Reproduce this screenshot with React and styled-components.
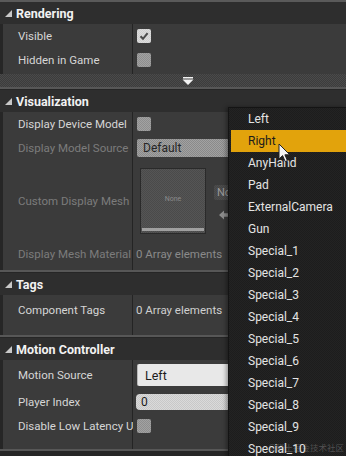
import styled, { createGlobalStyle } from "styled-components";

const GlobalStyle = createGlobalStyle`
  html, body {
    margin: 0;
    padding: 0;
    background: #262626;
  }
  * {
    box-sizing: border-box;
  }
`;

const checker = (a, b) =>
  `repeating-conic-gradient(${a} 0 25%, ${b} 0 50%) 0 0 / 2px 2px`;

const sections = [
  {
    title: "Rendering",
    pad: 2,
    expander: true,
    rows: [
      { label: "Visible", kind: "check", checked: true },
      { label: "Hidden in Game", kind: "check" },
    ],
  },
  {
    title: "Visualization",
    pad: 4,
    rows: [
      { label: "Display Device Model", kind: "check" },
      { label: "Display Model Source", kind: "combo", value: "Default", dim: true },
      { label: "Custom Display Mesh", kind: "mesh", dim: true, h: 82 },
      { label: "Display Mesh Material", kind: "array", dim: true },
    ],
  },
  {
    title: "Tags",
    pad: 10,
    rows: [{ label: "Component Tags", kind: "array", h: 30 }],
  },
  {
    title: "Motion Controller",
    pad: 11,
    rows: [
      { label: "Motion Source", kind: "select", value: "Left", h: 30 },
      { label: "Player Index", kind: "number", value: "0" },
      { label: "Disable Low Latency Update", kind: "check" },
    ],
  },
];

const options = [
  "Left",
  "Right",
  "AnyHand",
  "Pad",
  "ExternalCamera",
  "Gun",
  "Special_1",
  "Special_2",
  "Special_3",
  "Special_4",
  "Special_5",
  "Special_6",
  "Special_7",
  "Special_8",
  "Special_9",
  "Special_10",
];

function HeaderArrow() {
  return (
    <svg width="7" height="7" viewBox="0 0 7 7">
      <polygon points="7,0 7,7 0,7" fill="#c8c8c8" />
    </svg>
  );
}

function ValueCell({ row }) {
  switch (row.kind) {
    case "check":
      return (
        <CheckBox $checked={row.checked}>
          {row.checked && (
            <svg width="10" height="10" viewBox="0 0 10 10">
              <path d="M1.5 5.2 L4 7.8 L8.6 2.2" stroke="#4a4a4a" strokeWidth="2" fill="none" />
            </svg>
          )}
        </CheckBox>
      );
    case "combo":
      return <DisabledCombo>{row.value}</DisabledCombo>;
    case "select":
      return <SelectBox>{row.value}</SelectBox>;
    case "number":
      return <SpinBox>{row.value}</SpinBox>;
    case "array":
      return <ArrayText $dim={row.dim}>0 Array elements</ArrayText>;
    case "mesh":
      return (
        <MeshWrap>
          <Thumb>
            <ThumbLabel>None</ThumbLabel>
            <ThumbBar />
          </Thumb>
          <MeshSide>
            <NoneButton>None</NoneButton>
            <svg width="12" height="10" viewBox="0 0 12 10">
              <path d="M0 5 L5 0.5 L5 3.2 L12 3.2 L12 6.8 L5 6.8 L5 9.5 Z" fill="#8c8c8c" />
            </svg>
          </MeshSide>
        </MeshWrap>
      );
    default:
      return null;
  }
}

export default function App() {
  return (
    <Root>
      <GlobalStyle />
      {sections.map((s) => (
        <Section key={s.title}>
          <Header>
            <HeaderArrow />
            {s.title}
          </Header>
          <Body $pad={s.pad}>
            {s.rows.map((r) => (
              <Row key={r.label} $h={r.h}>
                <Label $dim={r.dim}>{r.label}</Label>
                <Value>
                  <ValueCell row={r} />
                </Value>
              </Row>
            ))}
          </Body>
          {s.expander && (
            <Expander>
              <svg width="12" height="8" viewBox="0 0 12 8">
                <rect x="1" y="0" width="10" height="1.5" fill="#f2f2f2" />
                <polygon points="0.5,2.5 11.5,2.5 6,8" fill="#f2f2f2" />
              </svg>
            </Expander>
          )}
        </Section>
      ))}

      <Menu>
        {options.map((o) => (
          <MenuItem key={o} $active={o === "Right"}>
            {o}
          </MenuItem>
        ))}
      </Menu>

      <Cursor width="13" height="20" viewBox="0 0 13 20">
        <path
          d="M1 1 L1 16 L4.6 12.6 L7.2 18.6 L9.4 17.6 L6.9 11.8 L11.8 11.8 Z"
          fill="#f4f4f4"
          stroke="#222"
          strokeWidth="1"
        />
      </Cursor>

      <Watermark>@稀土掘金技术社区</Watermark>
    </Root>
  );
}

const Root = styled.div`
  position: relative;
  width: 346px;
  height: 456px;
  overflow: hidden;
  background: #262626;
  border-top: 2px solid #5a5a5a;
  font-family: Roboto, "Noto Sans", "Noto Sans CJK SC", sans-serif;
  font-size: 11.5px;
`;

const Section = styled.section`
  border-bottom: 2px solid #575757;
  margin-bottom: 1px;
`;

const Header = styled.div`
  height: 22px;
  display: flex;
  align-items: center;
  gap: 4px;
  padding-left: 5px;
  background: #2e2e2e;
  color: #f2f2f2;
  font-weight: 700;
  font-size: 12.5px;
`;

const Body = styled.div`
  margin-left: 3px;
  padding-bottom: ${(p) => p.$pad || 0}px;
  background: linear-gradient(#242424, #242424) 129px 0 / 1px 100% no-repeat,
    #3b3b3b;
`;

const Row = styled.div`
  display: grid;
  grid-template-columns: 130px 1fr;
  height: ${(p) => p.$h || 24}px;
`;

const Label = styled.div`
  display: flex;
  align-items: center;
  padding-left: 15px;
  color: ${(p) => (p.$dim ? "#7c7c7c" : "#d6d6d6")};
  white-space: nowrap;
  overflow: hidden;
`;

const Value = styled.div`
  display: flex;
  align-items: center;
  padding-left: 4px;
  min-width: 0;
`;

const CheckBox = styled.div`
  width: 14px;
  height: 14px;
  border-radius: 2px;
  display: flex;
  align-items: center;
  justify-content: center;
  background: ${(p) =>
    p.$checked ? checker("#dcdcdc", "#cfcfcf") : checker("#a2a2a2", "#8e8e8e")};
`;

const DisabledCombo = styled.div`
  width: 100px;
  height: 18px;
  display: flex;
  align-items: center;
  padding-left: 6px;
  border-radius: 2px;
  background: ${checker("#a2a2a2", "#8a8a8a")};
  color: #262626;
  font-size: 12px;
`;

const SelectBox = styled.div`
  width: 100px;
  height: 22px;
  display: flex;
  align-items: center;
  padding-left: 7px;
  border-radius: 2px;
  border-left: 1px solid #b8b8b8;
  background: #e8e8e8;
  color: #1c1c1c;
  font-size: 12.5px;
`;

const SpinBox = styled.div`
  width: 100px;
  height: 16px;
  margin-left: -1px;
  display: flex;
  align-items: center;
  padding-left: 5px;
  border-radius: 4px;
  background: ${checker("#dadada", "#c8c8c8")};
  color: #1c1c1c;
  font-size: 12px;
`;

const ArrayText = styled.div`
  margin-left: -1px;
  color: ${(p) => (p.$dim ? "#8a8a8a" : "#cfcfcf")};
  white-space: nowrap;
`;

const MeshWrap = styled.div`
  display: flex;
  align-items: flex-start;
  gap: 8px;
  height: 100%;
  padding: 8px 0 0 3px;
`;

const Thumb = styled.div`
  position: relative;
  width: 66px;
  height: 66px;
  border: 1px solid #2a2a2a;
  background: ${checker("#555555", "#4a4a4a")};
  display: flex;
  flex-direction: column;
  justify-content: flex-end;
  align-items: stretch;
  padding: 0 1px 2px;
`;

const ThumbLabel = styled.div`
  flex: 1;
  display: flex;
  align-items: center;
  justify-content: center;
  color: #8a8a8a;
  font-size: 7px;
`;

const ThumbBar = styled.div`
  height: 3px;
  background: #a0a0a0;
`;

const MeshSide = styled.div`
  display: flex;
  flex-direction: column;
  gap: 10px;
  padding-top: 17px;
  padding-left: 0;
  svg {
    margin-left: 5px;
  }
`;

const NoneButton = styled.div`
  height: 15px;
  display: flex;
  align-items: center;
  padding: 0 3px;
  border-radius: 2px;
  background: ${checker("#4d4d4d", "#454545")};
  color: #9a9a9a;
  font-size: 11px;
`;

const Expander = styled.div`
  height: 13px;
  display: flex;
  align-items: center;
  justify-content: center;
  padding-left: 30px;
  background: ${checker("#3c3c3c", "#4a4a4a")};
`;

const Menu = styled.div`
  position: absolute;
  left: 228px;
  top: 105px;
  width: 118px;
  height: 351px;
  padding-left: 2px;
  background: ${checker("#1d1d1d", "#232323")};
  border-left: 1px solid #141414;
  border-top: 1px solid #141414;
  box-shadow: -2px 0 4px rgba(0, 0, 0, 0.35);
`;

const MenuItem = styled.div`
  height: 22px;
  display: flex;
  align-items: center;
  padding-left: 17px;
  font-size: 12px;
  color: ${(p) => (p.$active ? "#1b1b1b" : "#e4e4e4")};
  background: ${(p) => (p.$active ? "#e2a30c" : "transparent")};
`;

const Cursor = styled.svg`
  position: absolute;
  left: 278px;
  top: 141px;
`;

const Watermark = styled.div`
  position: absolute;
  right: 2px;
  bottom: 3px;
  font-size: 8.5px;
  color: rgba(255, 255, 255, 0.22);
  white-space: nowrap;
`;
